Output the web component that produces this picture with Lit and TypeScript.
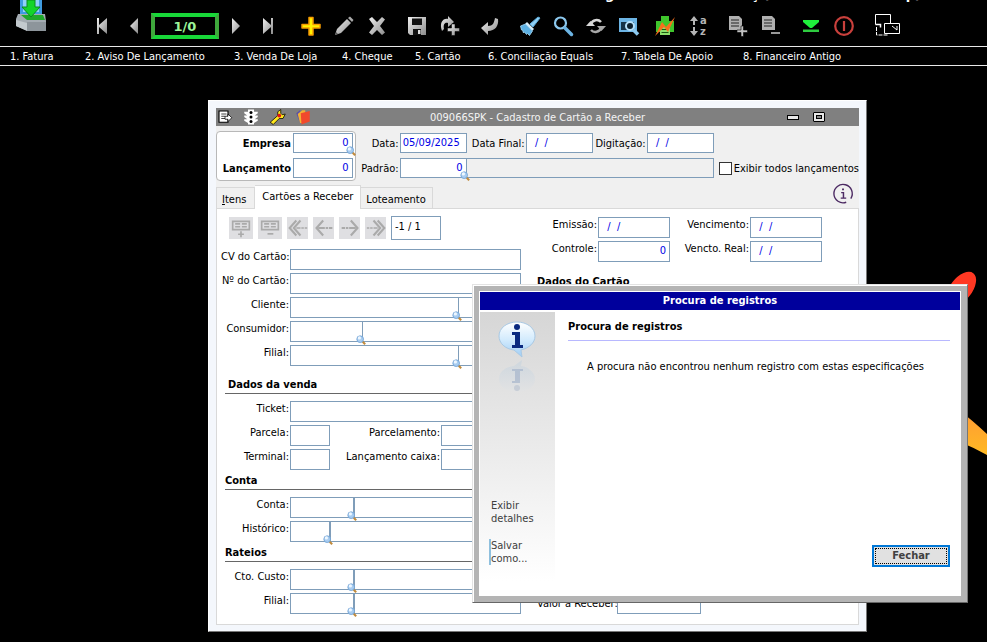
import { LitElement, html, svg, css, nothing, TemplateResult } from "lit";
import { customElement, property } from "lit/decorators.js";
import { classMap } from "lit/directives/class-map.js";

const FONT = css`11px "DejaVu Sans Condensed", "Noto Sans", sans-serif`;

/* ---------- icons, each on a 24 x 24 canvas ---------- */

const ICONS: Record<string, TemplateResult> = {
  first: svg`<path d="M7 4h2v7l8-7v16l-8-7v7H7z" fill="url(#g)"/>`,
  prev: svg`<path d="M16 4v16L8 12z" fill="url(#g)"/>`,
  next: svg`<path d="M8 4v16l8-8z" fill="url(#g)"/>`,
  last: svg`<path d="M17 4h-2v7L7 4v16l8-7v7h2z" fill="url(#g)"/>`,
  add: svg`<path d="M10 3.500h4v7h7v3.500h-7v7h-4v-7H3v-3.500h7z" fill="#fff200" stroke="#f59b00" stroke-width="1.500" stroke-linejoin="round"/>`,
  edit: svg`<path d="M3 21l2-6L15 5l4 4L9 19z" fill="url(#g)"/><path d="M16 4l2-1.500 3.500 3.500L20 8z" fill="#aaa"/><path d="M3 21l1-3 2 2z" fill="#555"/>`,
  remove: svg`<path d="M4 5l3-2 5 5 5-5 3 2.500-5 6.500 5 6.500-3 2.500-5-5-5 5-3-2.500L9 12z" fill="url(#g)"/>`,
  save: svg`<path d="M3 3h18v18H5l-2-2z" fill="url(#g)"/><path d="M7 4.500h10V11H7z" fill="#111"/><path d="M8 15h8v6H8z" fill="#111"/><path d="M13 16h2.500v4H13z" fill="#ddd"/>`,
  repeat: svg`<path d="M4 17C1 9 5 4 10 5V2l6 6-6 5v-4c-3-1-5 1-4 6z" fill="url(#g)"/><path d="M13.500 10h3.500v4h4.500v3.500H17v4h-3.500v-4h-4V14h4z" fill="url(#g)" stroke="#000" stroke-width=".5"/>`,
  undo: svg`<path d="M3 14l7-6v4c5 0 6-3 7-8l3 1c1 7-3 12-10 12v4z" fill="url(#g)"/>`,
  clear: svg`<path d="M20 3l2 1-7 9-3-3z" fill="#8fd0f5" stroke="#5aa9d8"/><path d="M9 8l7 7-2 2-7-7z" fill="#d7effc"/><path d="M2.500 12l5-2 7 7-3 4.500-2-2-1 1-2-2.500-1 1-1-3-1 0z" fill="#5cb0e3" stroke="#a8dcf8" stroke-width=".8"/>`,
  search: svg`<circle cx="9.500" cy="9" r="5.500" fill="none" stroke="#8cc8ee" stroke-width="2.200"/><path d="M14 14l6.500 6.500" stroke="#6cb4e4" stroke-width="3.500" stroke-linecap="round"/>`,
  refresh: svg`<path d="M7 10a6 6 0 0 1 10-2" fill="none" stroke="#d8d8d8" stroke-width="2.500"/><path d="M2 12l4.500-5 4.500 5z" fill="#d8d8d8"/><path d="M17 14a6 6 0 0 1-10 2" fill="none" stroke="#a8a8a8" stroke-width="2.500"/><path d="M22 12l-4.500 5-4.500-5z" fill="#a8a8a8"/>`,
  find: svg`<path d="M2 4h18v14H2z" fill="#6cb4e4"/><path d="M4 8h13v8H4z" fill="#153247"/><circle cx="13" cy="12" r="4" fill="#0d1f2c" stroke="#b5e0fa" stroke-width="2"/><path d="M16 15.500l5 5" stroke="#8cc8ee" stroke-width="3.500"/>`,
  print: svg`<path d="M8 2h8v5h5v11H3V7h5z" fill="#3fc52c"/><path d="M7 13h10v8H7z" fill="#8ee06a"/><path d="M8.500 15.500h7M8.500 18.500h7" stroke="#1b5a12"/><path d="M2 22L9 8l4 5 9-10-7 15-4-5z" fill="#f7701c"/>`,
  sort: svg`<path d="M8 2l4 5H9v4H7V7H4z" fill="#b5b5b5"/><path d="M8 22l4-5H9v-4H7v4H4z" fill="#b5b5b5"/><text x="14" y="10" class="glyph">a</text><text x="14" y="21" class="glyph">z</text>`,
  addRow: svg`<path d="M3 2h10l3 3v11H3z" fill="#b0b0b0"/><path d="M5 6h8M5 9h8M5 12h8" stroke="#222"/><path d="M15 12h2.500v4h4v2.500h-4v4H15v-4h-4V16h4z" fill="#c2c2c2" stroke="#000" stroke-width=".6"/>`,
  dropRow: svg`<path d="M3 2h10l3 3v11H3z" fill="#b0b0b0"/><path d="M5 6h8M5 9h8M5 12h8" stroke="#222"/><path d="M12 18h9v2h-9z" fill="#999"/>`,
  export: svg`<path d="M4 6h16v2l-7 6h-2L4 8z" fill="#1ff23c"/><path d="M4 15.500h16V18H4z" fill="#2ecc40"/>`,
  power: svg`<circle cx="12" cy="12" r="8.800" fill="none" stroke="#c9403c" stroke-width="2.200"/><path d="M12 7v10" stroke="#c9403c" stroke-width="2.200"/>`,
  windows: svg`<path d="M3.500 10.500V0.500h15V9" fill="none" stroke="#fff"/><path d="M3.500 10.500h5v3" fill="none" stroke="#fff" stroke-width="1.500"/><path d="M12.500 9.500h15v10h-15z" fill="#000" stroke="#fff"/><path d="M20 12l5 4v-4" fill="none" stroke="#fff"/><path d="M4.500 13v8H16" fill="none" stroke="#fff" stroke-dasharray="4 1"/>`,

  run: svg`<path d="M4 4h12v15H4z" fill="#fff" stroke="#000" stroke-width="1.500"/><path d="M7 8h7M7 11h5M7 14h5" stroke="#000"/><path d="M12 11h4V8l5 5-5 5v-3h-4z" fill="#fff" stroke="#000"/>`,
  lights: svg`<path d="M8 2h8v3h5v2l-4 3h4v2l-4 3h4v2l-5 3v2H8v-2l-5-3v-2h4l-4-3v-2h4L3 7V5h5z" fill="#fff"/><circle cx="12" cy="6" r="2"/><circle cx="12" cy="12" r="2"/><circle cx="12" cy="18" r="2"/>`,
  wrench: svg`<path d="M3 19L13 10V5l4-3v5l2 2 4-1-3 6h-5L7 22z" fill="#ffe71c" stroke="#000"/><circle cx="15" cy="10" r="2.500" fill="#e01414"/>`,
  books: svg`<path d="M3 7l5-4 5 15-5 2z" fill="#5a4fa8"/><path d="M5 8l6-5h4v17H8z" fill="#f2b233"/><path d="M9 7l12-3v14l-11 4z" fill="#f1492c"/>`,
  info: svg`<path d="M20.500 17a10 10 0 1 0-5 4" fill="none" stroke="#4c2a63" stroke-width="1.500"/><path d="M10 10.500h2.500V16M9.500 16.500h6" fill="none" stroke="#4c2a63" stroke-width="1.600"/><path d="M11 6h2v2h-2z" fill="#4c2a63"/>`,

  gridAdd: svg`<path d="M2 4h20v10H2z" fill="none" stroke="#aaa" stroke-width="2"/><path d="M5 7h6M5 10.500h6M13 7h6M13 10.500h6" stroke="#aaa" stroke-width="2"/><path d="M12 16v7M8.500 19.500h7" stroke="#aaa" stroke-width="2"/>`,
  gridDrop: svg`<path d="M2 4h20v10H2z" fill="none" stroke="#aaa" stroke-width="2"/><path d="M5 7h6M5 10.500h6M13 7h6M13 10.500h6" stroke="#aaa" stroke-width="2"/><path d="M9 19h7" stroke="#aaa" stroke-width="2"/>`,
  gridFirst: svg`<path d="M10 3l-8 9 8 9M15 3l-8 9 8 9" fill="none" stroke="#aaa" stroke-width="2.500"/><path d="M10 12h13" stroke="#aaa" stroke-width="2" stroke-dasharray="5 1 3 1"/>`,
  gridPrev: svg`<path d="M11 3l-8 9 8 9" fill="none" stroke="#aaa" stroke-width="2.500"/><path d="M5 12h17" stroke="#aaa" stroke-width="2.500" stroke-dasharray="8 1 3 1"/>`,
  gridNext: svg`<path d="M13 3l8 9-8 9" fill="none" stroke="#aaa" stroke-width="2.500"/><path d="M19 12H2" stroke="#aaa" stroke-width="2.500" stroke-dasharray="8 1 3 1"/>`,
  gridLast: svg`<path d="M14 3l8 9-8 9M9 3l8 9-8 9" fill="none" stroke="#aaa" stroke-width="2.500"/><path d="M14 12H1" stroke="#aaa" stroke-width="2" stroke-dasharray="5 1 3 1"/>`,
  lens: svg`<path d="M15 15l7 7" stroke="#c08a3c" stroke-width="5"/><circle cx="10" cy="10" r="8" fill="#a9cdf0" stroke="#6b9fd4" stroke-width="2"/><circle cx="8" cy="7" r="4" fill="#eef7ff"/>`,
};

@customElement("app-icon")
export class AppIcon extends LitElement {
  @property() name = "";

  static styles = css`
    :host { display: inline-flex; width: 24px; height: 24px; flex: none; }
    svg { width: 100%; height: 100%; overflow: visible; }
    .glyph { font: bold 10px "DejaVu Sans", sans-serif; fill: #b5b5b5; }
  `;

  render() {
    return html`<svg viewBox="0 0 24 24" aria-hidden="true">
      <defs>
        <linearGradient id="g" x1="0" y1="0" x2="1" y2="1">
          <stop offset="0" stop-color="#f0f0f0" /><stop offset="1" stop-color="#8c8c8c" />
        </linearGradient>
      </defs>
      ${ICONS[this.name]}
    </svg>`;
  }
}

/* ---------- labelled field, optionally with a lookup code in front ---------- */

@customElement("form-field")
export class FormField extends LitElement {
  @property() label = "";
  @property() value = "";
  @property({ type: Boolean }) numeric = false;
  @property({ type: Boolean }) strong = false;
  @property({ type: Boolean }) middle = false;
  /** none: plain box; self: lens on the box; short, medium, code, long: lens on a code box */
  @property() lookup = "";

  static styles = css`
    :host { display: flex; align-items: flex-start; font: ${FONT}; color: #000; }
    :host([middle]) { align-items: center; }
    label {
      width: var(--label, 69px); flex: none; box-sizing: border-box; padding-right: 1px;
      text-align: right; line-height: 15px; white-space: nowrap;
    }
    .strong { font-weight: bold; padding-right: 2px; }
    .boxes { flex: 1; display: flex; min-width: 0; }
    .cell { position: relative; flex: 1; display: flex; min-width: 0; }
    .short { flex: none; width: 40px; }
    .code { flex: none; width: 64px; }
    .medium { flex: none; width: 73px; margin-right: -1px; }
    .long { flex: none; width: 169px; margin-right: -1px; }
    input {
      box-sizing: border-box; width: 100%; height: var(--box, 21px); margin: 0; padding: 0 3px 2px 2px;
      border: 1px solid #7f9db9; border-radius: 0; background: #fff; outline: none;
      font: inherit; color: #0000e6; white-space: pre;
    }
    .numeric { text-align: right; }
    app-icon { position: absolute; right: -3px; bottom: -3px; width: 10px; height: 10px; z-index: 1; }
  `;

  render() {
    const code = this.lookup && this.lookup !== "self";
    return html`
      <label class=${classMap({ strong: this.strong })} for="box">${this.label}</label>
      <div class="boxes">
        <div class="cell ${code ? this.lookup : ""}">
          <input id="box" class=${classMap({ numeric: this.numeric })} .value=${this.value} />
          ${this.lookup ? html`<app-icon name="lens"></app-icon>` : nothing}
        </div>
        ${code
          ? html`<div class="cell"><input aria-label="${this.label} descrição" /></div>`
          : nothing}
      </div>
    `;
  }
}

/* ---------- the record form ---------- */

@customElement("record-window")
export class RecordWindow extends LitElement {
  static styles = css`
    :host {
      display: block; box-sizing: border-box; width: 659px; padding: 7px 7px 6px; font: ${FONT}; color: #000;
      background: #f4f7fc; border: 1px solid #fff; border-right-color: #777; border-bottom-color: #777;
    }
    .title {
      display: grid; grid-template-columns: 1fr auto 1fr; align-items: center; height: 18px;
      background: #808080; color: #f4f4f4;
    }
    .marks { display: flex; gap: 8px; }
    .marks app-icon { width: 18px; height: 18px; }
    .title h1 { margin: 0; font: inherit; }
    .sizes { display: flex; align-items: center; justify-content: flex-end; gap: 14px; padding-right: 34px; }
    .title button { border: 1px solid #000; background: #e8e8e8; padding: 0; box-sizing: border-box; }
    .min { width: 12px; height: 5px; }
    .max { width: 12px; height: 10px; display: grid; place-items: center; border-radius: 1px; }
    .max::before { content: ""; width: 4px; height: 2px; border: 1px solid #000; background: #888; }
    .head { display: flex; background: #f0f0f0; padding: 5px 0 2px; }
    .key {
      box-sizing: border-box; width: 141px; padding: 1px 2px; display: grid; gap: 5px; --label: 74px; --box: 20px;
      border: 1px solid #b8b8b8; border-radius: 4px; background: #fff; align-content: start; height: 50px;
    }
    .filters { display: grid; gap: 5px; align-content: start; padding-top: 2px; --box: 20px; }
    .line { display: flex; align-items: center; }
    .a { --label: 43px; width: 110px; }
    .b { --label: 59px; width: 126px; }
    .c { --label: 54px; width: 121px; }
    .filters { padding-left: 1px; }
    .name { box-sizing: border-box; width: 248px; height: 20px; margin: 0 0 0 -1px; border: 1px solid #7f9db9; background: #f0f0f0; }
    .check { display: flex; align-items: center; gap: 2px; margin-left: 5px; white-space: nowrap; }
    .check input {
      appearance: none; box-sizing: border-box; width: 13px; height: 13px; margin: 0;
      border: 1px solid #333; background: #fff;
    }
    .tabs { display: flex; align-items: flex-end; height: 25px; background: #f0f0f0; }
    .tab {
      box-sizing: border-box; height: 21px; padding: 2px 6px 0 5px; border: 1px solid #d9d9d9; border-left: 0; border-bottom: 0;
      background: #f0f0f0; font: inherit; color: #000; white-space: nowrap;
    }
    .tab:first-child { border-left: 1px solid #d9d9d9; padding: 2px 8px 0 5px; }
    .on { height: 24px; padding: 0 7px 2px; background: #fff; position: relative; margin-bottom: -1px; }
    .info { margin: 0 5px 3px auto; border: 0; padding: 0; background: none; display: flex; }
    .info app-icon { width: 22px; height: 22px; }
    .page {
      display: grid; grid-template-columns: 300px 1fr; column-gap: 16px; box-sizing: border-box;
      padding: 7px 8px 10px 4px; background: #fff; border: 1px solid #d9d9d9;
    }
    .col { display: flex; flex-direction: column; gap: 3px; }
    .nav { display: flex; align-items: center; gap: 5px; height: 24px; padding-left: 8px; margin-bottom: 6px; }
    .nav button { width: 21px; height: 22px; padding: 0; border: 0; background: #dfdfe2; display: grid; place-items: center; }
    .nav button:first-child, .nav button:nth-child(2) { width: 24px; }
    .nav app-icon { width: 20px; height: 20px; }
    .nav input {
      box-sizing: border-box; width: 50px; height: 24px; border: 1px solid #7f9db9; padding: 0 3px 3px;
      margin: 0; font: inherit; color: #000;
    }
    h2 {
      margin: 0 0 4px 4px; font: bold ${FONT}; line-height: 15px; height: 17px; box-sizing: border-box;
      border-bottom: 1px solid #666;
    }
    .pair { display: flex; }
    .s { width: 109px; }
    .l { flex: 1; --label: 111px; }
    .first { margin-top: 8px; padding-left: 3px; }
    .plain { border: 0; margin: 9px 0 0; }
    .d1 { --label: 61px; width: 133px; }
    .d2 { --label: 80px; width: 152px; }
    .right { padding-top: 1px; }
    .total { --label: 80px; width: 164px; margin-top: auto; }
  `;

  render() {
    return html`
      <header class="title">
        <div class="marks">
          ${["run", "lights", "wrench", "books"].map((n) => html`<app-icon name=${n}></app-icon>`)}
        </div>
        <h1>009066SPK - Cadastro de Cartão a Receber</h1>
        <div class="sizes">
          <button class="min" aria-label="Minimizar"></button>
          <button class="max" aria-label="Maximizar"></button>
        </div>
      </header>

      <div class="head">
        <div class="key">
          <form-field label="Empresa" value="0" numeric strong middle lookup="self"></form-field>
          <form-field label="Lançamento" value="0" numeric strong middle></form-field>
        </div>
        <div class="filters">
          <div class="line">
            <form-field class="a" label="Data:" value="05/09/2025" middle></form-field>
            <form-field class="b" label="Data Final:" value="  /  /" middle></form-field>
            <form-field class="c" label="Digitação:" value="  /  /" middle></form-field>
          </div>
          <div class="line">
            <form-field class="a" label="Padrão:" value="0" numeric middle lookup="self"></form-field>
            <input class="name" aria-label="Nome do padrão" readonly />
            <label class="check"><input type="checkbox" />Exibir todos lançamentos</label>
          </div>
        </div>
      </div>

      <div class="tabs" role="tablist">
        <button class="tab" role="tab"><u>I</u>tens</button>
        <button class="tab on" role="tab" aria-selected="true">Cartões a Receber</button>
        <button class="tab" role="tab">Loteamento</button>
        <button class="info" aria-label="Informações"><app-icon name="info"></app-icon></button>
      </div>

      <div class="page">
        <div class="col">
          <div class="nav">
            ${["gridAdd", "gridDrop", "gridFirst", "gridPrev", "gridNext", "gridLast"].map(
              (n) => html`<button aria-label=${n}><app-icon name=${n}></app-icon></button>`
            )}
            <input aria-label="Registro" value="-1 / 1" />
          </div>
          <form-field label="CV do Cartão:"></form-field>
          <form-field label="Nº do Cartão:"></form-field>
          <form-field label="Cliente:" lookup="long"></form-field>
          <form-field label="Consumidor:" lookup="medium"></form-field>
          <form-field label="Filial:" lookup="long"></form-field>
          <h2 class="first">Dados da venda</h2>
          <form-field label="Ticket:"></form-field>
          <div class="pair">
            <form-field class="s" label="Parcela:"></form-field>
            <form-field class="l" label="Parcelamento:"></form-field>
          </div>
          <div class="pair">
            <form-field class="s" label="Terminal:"></form-field>
            <form-field class="l" label="Lançamento caixa:"></form-field>
          </div>
          <h2>Conta</h2>
          <form-field label="Conta:" lookup="code"></form-field>
          <form-field label="Histórico:" lookup="short"></form-field>
          <h2>Rateios</h2>
          <form-field label="Cto. Custo:" lookup="code"></form-field>
          <form-field label="Filial:" lookup="code"></form-field>
        </div>

        <div class="col right">
          <div class="pair">
            <form-field class="d1" label="Emissão:" value="  /  /"></form-field>
            <form-field class="d2" label="Vencimento:" value="  /  /"></form-field>
          </div>
          <div class="pair">
            <form-field class="d1" label="Controle:" value="0" numeric></form-field>
            <form-field class="d2" label="Vencto. Real:" value="  /  /"></form-field>
          </div>
          <h2 class="plain">Dados do Cartão</h2>
          <form-field class="total" label="Valor a Receber:" middle></form-field>
        </div>
      </div>
    `;
  }
}

/* ---------- the message dialog ---------- */

@customElement("message-dialog")
export class MessageDialog extends LitElement {
  static styles = css`
    :host {
      display: flex; flex-direction: column; box-sizing: border-box; width: 496px; height: 319px; padding: 0;
      font: ${FONT}; color: #000; background: #fff;
      border: 1px solid #e3e3e3; border-right-color: #777; border-bottom-color: #666;
    }
    .frame {
      flex: 1; display: flex; flex-direction: column; margin: 1px 0 0 1px; padding: 1px 1px 0;
      border: solid #b4b4b4; border-width: 5px 6px 6px 5px;
    }
    h1 { margin: 0; height: 18px; background: #00009c; color: #fff; font: bold ${FONT}; line-height: 18px; text-align: center; }
    .body { flex: 1; display: flex; padding-top: 2px; }
    .side {
      width: 75px; box-sizing: border-box; padding: 9px 0 16px 11px; margin-bottom: 15px; display: flex; flex-direction: column;
      background: linear-gradient(#d6d6d6, #fff);
    }
    .side svg { width: 52px; height: 76px; }
    .side a { color: #404040; text-decoration: none; line-height: 13px; width: 56px; }
    .side .details { margin-top: auto; margin-bottom: 14px; }
    .side .save { border-left: 2px solid #8fc0de; margin-left: -2px; }
    .main { flex: 1; display: flex; flex-direction: column; padding: 6px 10px 29px 13px; }
    h2 { margin: 0; height: 23px; box-sizing: border-box; font: bold ${FONT}; line-height: 17px; border-bottom: 1px solid #b8b8ff; }
    p { margin: 18px 0 0 19px; line-height: 15px; }
    .close {
      align-self: flex-end; margin-top: auto; box-sizing: border-box; width: 78px; height: 22px; padding: 1px;
      border: 2px solid #0078d7; background: #e1e1e1; font: bold ${FONT}; color: #404040; display: flex;
    }
    .close span { flex: 1; border: 1px dotted #000; line-height: 14px; }
  `;

  render() {
    return html`
      <div class="frame" role="alertdialog" aria-labelledby="title">
        <h1 id="title">Procura de registros</h1>
        <div class="body">
          <nav class="side">
            <svg viewBox="0 0 52 76" aria-hidden="true">
              <defs>
                <linearGradient id="bubble" x1="0" y1="0" x2="0" y2="1">
                  <stop offset="0" stop-color="#fff" /><stop offset=".5" stop-color="#d3ebfd" /><stop offset="1" stop-color="#9fcdf5" />
                </linearGradient>
                <linearGradient id="echo" x1="0" y1="0" x2="0" y2="1">
                  <stop offset="0" stop-color="#c4d2de" /><stop offset="1" stop-color="#e2e3e4" />
                </linearGradient>
              </defs>
              <path d="M26 1c10 0 18 6 18 14 0 7-6 12-14 14l1 7-8-7C14 28 8 22 8 15 8 7 16 1 26 1z" fill="url(#bubble)" stroke="#a9c9e4" />
              <circle cx="26" cy="6" r="3" fill="#0a2a80" />
              <path d="M21 11h8v13h3v3H21v-3h3V14h-3z" fill="#0a2a80" />
              <path d="M31 39l-8 6C14 46 8 51 8 58c0 8 8 13 18 13s18-5 18-13c0-6-6-12-14-13z" fill="url(#echo)" opacity=".6" />
              <path d="M21 48h11v2h-3v12h-8v-2h3V50h-3z" fill="#9fafc8" opacity=".6" />
              <circle cx="26" cy="67" r="3" fill="#b5bfcf" opacity=".6" />
            </svg>
            <a class="details" href="#detalhes">Exibir<br />detalhes</a>
            <a class="save" href="#salvar">Salvar<br />como...</a>
          </nav>
          <div class="main">
            <h2>Procura de registros</h2>
            <p>A procura não encontrou nenhum registro com estas especificações</p>
            <button class="close"><span>Fechar</span></button>
          </div>
        </div>
      </div>
    `;
  }
}

/* ---------- shell ---------- */

const MENU = [
  "1. Fatura", "2. Aviso De Lançamento", "3. Venda De Loja", "4. Cheque", "5. Cartão",
  "6. Conciliação Equals", "7. Tabela De Apoio", "8. Financeiro Antigo",
];

const TOOLS: string[][] = [
  ["add", "edit", "remove"], ["save", "repeat"], ["undo"], ["clear", "search", "refresh", "find"],
  ["print", "sort"], ["addRow", "dropRow"], ["export", "power"], ["windows"],
];

@customElement("app-root")
export class AppRoot extends LitElement {
  static styles = css`
    :host {
      display: flex; flex-direction: column; min-height: 100vh; position: relative; overflow: hidden;
      background: #000; color: #fff; font: ${FONT};
    }
    .bar { display: flex; align-items: center; height: 46px; padding-top: 6px; box-sizing: border-box; flex: none; }
    .logo { position: absolute; left: 15px; top: 0; width: 32px; height: 32px; }
    .caption {
      position: absolute; left: 605px; top: 0; width: 316px; height: 2px; overflow: hidden; display: flex;
      justify-content: space-between; align-items: flex-end; font: bold 13px "DejaVu Sans", sans-serif; line-height: 15px;
    }
    .tools { display: flex; gap: 9px; margin-right: 16px; }
    .steps { gap: 8px; margin-right: 5px; }
    .steps:first-child { margin-left: 90px; }
    .steps:nth-child(3) { margin-right: 19px; }
    .tools:nth-child(7) { margin-right: 12px; }
    .tools button { width: 24px; height: 24px; border: 0; padding: 0; background: none; display: flex; }
    .count {
      box-sizing: border-box; width: 68px; height: 26px; margin: 0 5px 0 0; padding: 0; text-align: center; background: #000;
      border: 4px solid; border-color: #18d838 #3fa83c; border-radius: 0; color: #9df59a;
      font: bold 13px "DejaVu Sans", sans-serif;
    }
    .menu {
      display: grid; grid-template-columns: 75px 149px 108px 73px 73px 133px 122px 1fr; align-items: center;
      height: 20px; box-sizing: border-box; padding: 0 10px; flex: none;
      border-top: 1px solid #e8e8e8; border-bottom: 1px solid #e8e8e8;
    }
    .menu a { color: #fff; text-decoration: none; white-space: nowrap; }
    .desk { position: relative; flex: 1; min-height: 576px; }
    .art { position: absolute; left: 940px; top: 194px; width: 80px; height: 210px; }
    record-window { position: absolute; left: 208px; top: 34px; }
    message-dialog { position: absolute; left: 472px; top: 218px; }
  `;

  render() {
    const tools = (names: string[], cls = "") => html`<div class="tools ${cls}">
      ${names.map((n) => html`<button aria-label=${n}><app-icon name=${n}></app-icon></button>`)}
    </div>`;
    return html`
      <div class="bar">
        ${tools(["first", "prev"], "steps")}
        <input class="count" aria-label="Registro atual" value="1/0" />
        ${tools(["next", "last"], "steps")}
        ${TOOLS.map((t) => tools(t))}
      </div>
      <div class="caption"><span>g</span><span>ç (</span><span>p)</span></div>
      <svg class="logo" viewBox="0 0 32 32" aria-hidden="true">
        <path d="M5 0h22v15H5z" fill="#3f9be0" /><path d="M8 0h16v12H8z" fill="#8fd0fa" />
        <path d="M3 14h27l1 7v10H13L1 26v-7z" fill="#a4acb2" /><path d="M6 15h22l2 5H12z" fill="#20a82a" />
        <path d="M12 22h19v9H12z" fill="#8d959b" /><path d="M1 20l11 3v8L1 26z" fill="#c3cace" />
        <path d="M12 0h8v7h5l-9 10-9-10h5z" fill="#13d42a" stroke="#0a8a1c" />
      </svg>
      <nav class="menu">${MENU.map((m) => html`<a href="#menu">${m}</a>`)}</nav>
      <main class="desk">
        <svg class="art" viewBox="0 0 80 210" aria-hidden="true">
          <defs>
            <linearGradient id="amber" x1="0" y1="0" x2="0" y2="1">
              <stop offset="0" stop-color="#ff9a34" /><stop offset="1" stop-color="#ffc31f" />
            </linearGradient>
          </defs>
          <ellipse cx="21" cy="29" rx="11" ry="20" fill="#ff3823" transform="rotate(38 21 29)" />
          <path d="M20 151q12 9 27 23l20 20v14q-20-15-47-26z" fill="url(#amber)" />
        </svg>
        <record-window></record-window>
        <message-dialog></message-dialog>
      </main>
    `;
  }
}
